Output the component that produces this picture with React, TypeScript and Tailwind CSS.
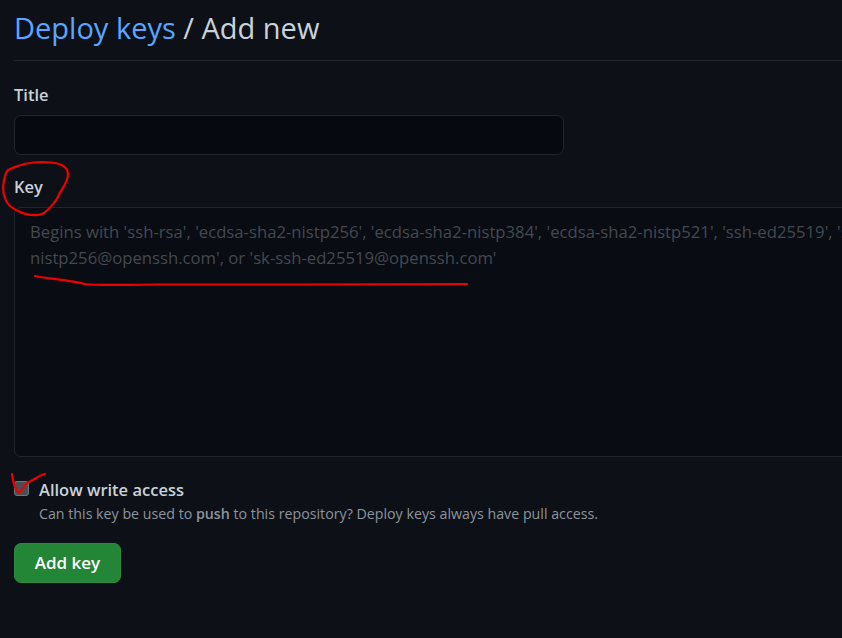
import React from 'react';

const font = { fontFamily: '"Open Sans", "Noto Sans", sans-serif' };

// red pen scribbles that sit on top of the screenshot
function Scribbles() {
  return (
    <svg className="absolute left-0 top-0 pointer-events-none" width="842" height="638" fill="none" stroke="#f00000" strokeWidth="2.2" strokeLinecap="round" strokeLinejoin="round">
      <path d="M8 170 C16 166 28 162 42 162 C58 162 68 165 68 174 C68 184 60 190 58 197 C53 205 46 214 38 215 C28 216 17 212 10 206 C3 199 2 188 4 180 C5 175 6 172 8 170" />
      <path d="M35 276 C50 279 70 280 85 284 C100 286 130 284.5 160 284.5 L300 284.5 L467 284" />
      <path d="M12 474 C13 482 15 490 19 493 C22 490 25 484 29 482 C35 479 40 475 45 474" />
    </svg>
  );
}

export default function App() {
  return (
    <div className="relative h-[638px] w-[842px] overflow-hidden bg-[#0d1117]" style={font}>
      <div className="pl-[14px]">
        <div className="h-[61px] border-b border-[#21262d] pt-[7px]">
          <h1 className="text-[29px] leading-[42px] font-normal text-[#c9d1d9] whitespace-nowrap">
            <span className="text-[#58a6ff]">Deploy keys</span> / Add new
          </h1>
        </div>

        <label className="mt-[22px] block text-[16.5px] leading-[24px] font-semibold text-[#c9d1d9]">Title</label>
        <div className="mt-[8px] h-[40px] w-[550px] rounded-[7px] border border-[#21262d] bg-[#060910]" />

        <label className="mt-[20px] block text-[16.5px] leading-[24px] font-semibold text-[#c9d1d9]">Key</label>
        <div className="mt-[8px] h-[250px] w-[900px] rounded-[7px] border border-[#21262d] bg-[#090c13] pl-[15px] pt-[11px] text-[16.7px] leading-[26px] text-[#434950] whitespace-nowrap">
          <div>Begins with 'ssh-rsa', 'ecdsa-sha2-nistp256', 'ecdsa-sha2-nistp384', 'ecdsa-sha2-nistp521', 'ssh-ed25519', 'sk-ecdsa-sha2-</div>
          <div>nistp256@openssh.com', or 'sk-ssh-ed25519@openssh.com'</div>
        </div>

        <div className="mt-[21px] flex gap-[10px]">
          <div className="mt-[3px] h-[15px] w-[15px] shrink-0 rounded-[3px] border border-[#6e7681] bg-[#4a4d52]" />
          <div>
            <div className="text-[16.5px] leading-[24px] font-semibold text-[#c9d1d9]">Allow write access</div>
            <p className="text-[14.22px] leading-[24px] text-[#8b949e]">
              Can this key be used to <b className="font-semibold">push</b> to this repository? Deploy keys always have pull access.
            </p>
          </div>
        </div>

        <button className="mt-[17px] block h-[40px] w-[107px] rounded-[7px] border border-[#2f8a3f] bg-[#238636] text-[17px] font-semibold text-white">Add key</button>
      </div>
      <Scribbles />
    </div>
  );
}
